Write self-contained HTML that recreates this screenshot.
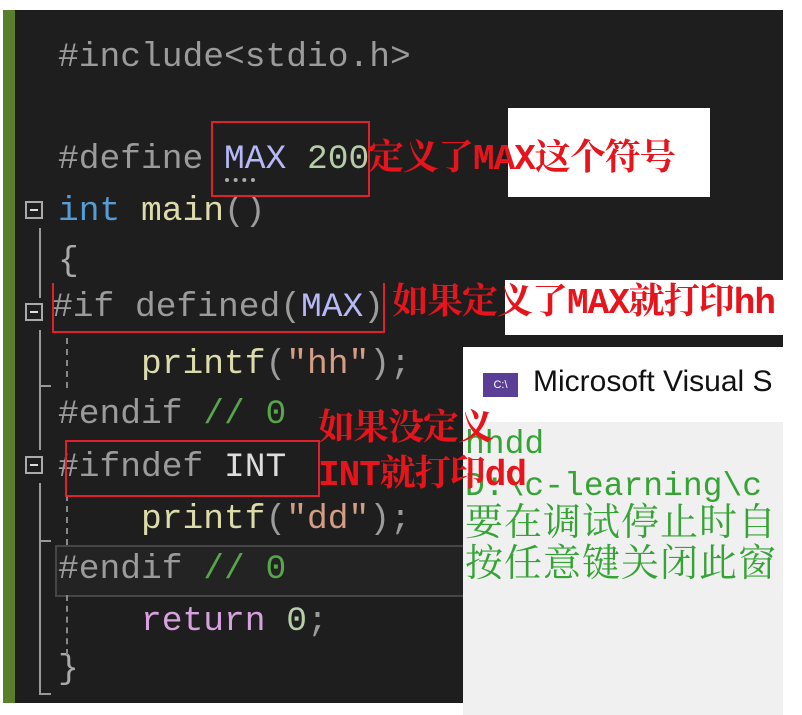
<!DOCTYPE html>
<html><head><meta charset="utf-8"><style>
body{margin:0;width:802px;height:715px;background:#fff;position:relative;overflow:hidden}
.ed{position:absolute;left:3px;top:10px;width:780px;height:693px;background:#1e1e1e}
.gb{position:absolute;left:3px;top:10px;width:12px;height:693px;background:#5a7f2c}
.l{position:absolute;font-family:"Liberation Mono","Noto Sans CJK SC",monospace;font-size:34.6px;line-height:40px;white-space:pre;color:#9b9b9b}
.r{position:absolute;font-family:"Liberation Mono","Noto Serif CJK SC",serif;font-weight:bold;font-size:36px;line-height:40px;color:#e8141c;white-space:pre;letter-spacing:-1px}
.box{position:absolute;border:2px solid #e0202a}
.fold{position:absolute;width:18px;height:18px;border:2px solid #aaa;box-sizing:border-box}
.fold:after{content:"";position:absolute;left:3px;top:6px;width:8px;height:2px;background:#ddd}
.vl{position:absolute;width:2px;background:#999}
.dl{position:absolute;width:0;border-left:2px dashed #888}
.con{position:absolute;left:463px;top:347px;width:320px;height:368px;background:#f0f0f0}
.ct{position:absolute;left:0;top:0;width:320px;height:75px;background:#fff}
.cl{position:absolute;left:465px;font-family:"Liberation Mono","Noto Serif CJK SC",monospace;font-size:33px;line-height:38px;color:#35a335;white-space:pre}
.cc{font-size:38px;letter-spacing:1px}
</style></head><body>
<div class="ed"></div><div class="gb"></div>
<div style="position:absolute;left:55px;top:545px;width:408px;height:48px;border:2px solid #464646;background:#232323"></div>
<div class="l" style="left:58px;top:38px">#include&lt;stdio.h&gt;</div>
<div class="l" style="left:58px;top:140px">#define <span style="color:#b8b8f8">MAX</span> <span style="color:#b5cea8">200</span></div>
<div class="l" style="left:58px;top:192px"><span style="color:#569cd6">int</span> <span style="color:#dcdcaa">main</span>()</div>
<div class="l" style="left:58px;top:242px;color:#aaa">{</div>
<div class="l" style="left:52px;top:288px">#if defined(<span style="color:#b8b8f8">MAX</span>)</div>
<div class="l" style="left:58px;top:345px">    <span style="color:#dcdcaa">printf</span>(<span style="color:#d69d85">"hh"</span>);</div>
<div class="l" style="left:58px;top:395px">#endif <span style="color:#57a64a">// 0</span></div>
<div class="l" style="left:58px;top:448px">#ifndef <span style="color:#ddd">INT</span></div>
<div class="l" style="left:58px;top:500px">    <span style="color:#dcdcaa">printf</span>(<span style="color:#d69d85">"dd"</span>);</div>
<div class="l" style="left:58px;top:550px">#endif <span style="color:#57a64a">// 0</span></div>
<div class="l" style="left:58px;top:602px">    <span style="color:#d8a0df">return</span> <span style="color:#b5cea8">0</span>;</div>
<div class="l" style="left:58px;top:650px;color:#aaa">}</div>
<div class="fold" style="left:25px;top:201px"></div>
<div class="fold" style="left:25px;top:303px"></div>
<div class="fold" style="left:25px;top:456px"></div>
<div class="vl" style="left:39px;top:228px;height:70px"></div>
<div class="vl" style="left:39px;top:330px;height:120px"></div>
<div class="vl" style="left:39px;top:483px;height:210px"></div>
<div class="vl" style="left:39px;top:385px;width:12px;height:2px"></div>
<div class="vl" style="left:39px;top:540px;width:12px;height:2px"></div>
<div class="vl" style="left:39px;top:693px;width:12px;height:2px"></div>
<div class="dl" style="left:66px;top:338px;height:50px"></div>
<div class="dl" style="left:66px;top:495px;height:50px"></div>
<div class="dl" style="left:66px;top:595px;height:60px"></div>
<div style="position:absolute;left:225px;top:178px;width:30px;height:4px;border-top:4px dotted #aaa"></div>
<div style="position:absolute;left:508px;top:108px;width:202px;height:89px;background:#fff"></div>
<div style="position:absolute;left:505px;top:280px;width:297px;height:55px;background:#fff"></div>
<div class="con"><div class="ct"></div>
<div style="position:absolute;left:20px;top:26px;width:35px;height:24px;background:#5b3f97;color:#fff;font:11px 'Liberation Sans',sans-serif;line-height:24px;text-align:center">C:\</div>
<div style="position:absolute;left:70px;top:18px;font:30px 'Liberation Sans',sans-serif;color:#111;white-space:nowrap">Microsoft Visual S</div>
</div>
<div class="cl" style="top:426px">hhdd</div>
<div class="cl" style="top:468px">D:\c-learning\c</div>
<div class="cl cc" style="top:507px">要在调试停止时自</div>
<div class="cl cc" style="top:548px">按任意键关闭此窗</div>
<div class="box" style="left:211px;top:121px;width:155px;height:72px"></div>
<div class="box" style="left:52px;top:283px;width:329px;height:48px;border-top:none"></div>
<div class="box" style="left:65px;top:440px;width:251px;height:53px"></div>
<div class="r" style="left:368px;top:140px">定义了MAX这个符号</div>
<div class="r" style="left:392px;top:284px">如果定义了MAX就打印hh</div>
<div class="r" style="left:318px;top:410px">如果没定义</div>
<div class="r" style="left:318px;top:456px">INT就打印dd</div>
</body></html>
